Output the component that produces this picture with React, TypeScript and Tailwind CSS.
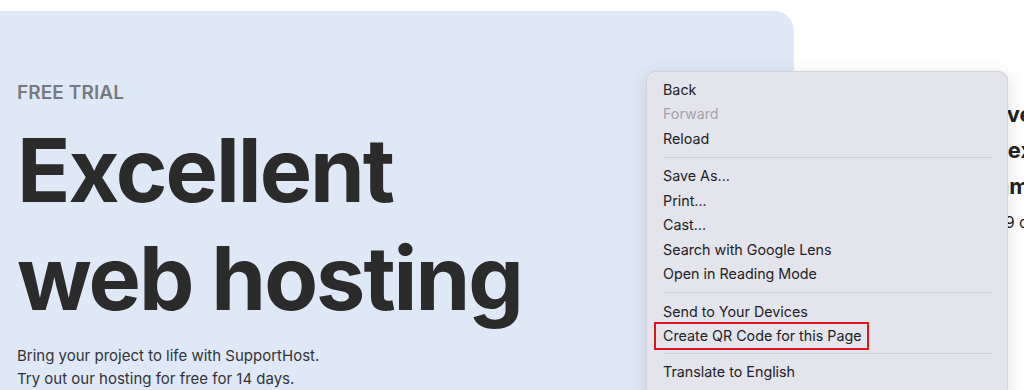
import React from "react";

const Sep = ({ tight }: { tight?: boolean }) => (
  <div className={`${tight ? "my-[5px]" : "my-[6px]"} ml-4 mr-[15px] h-px bg-[#cdd0da]`} />
);

const Item = ({ children, disabled }: { children: React.ReactNode; disabled?: boolean }) => (
  <div className={`h-[24.5px] flex items-center pl-4 ${disabled ? "text-[#a3a3aa]" : "text-[#222226]"}`}>
    {children}
  </div>
);

export default function App() {
  return (
    <div className="relative w-[1024px] h-[390px] overflow-hidden bg-white" style={{ fontFamily: "Inter, 'Noto Sans', sans-serif" }}>
      <div className="flex pt-[11px] h-full">
        <div className="w-[794px] shrink-0 h-[420px] bg-[#dfe8f7] rounded-tr-[20px] pl-[17px] pt-[70px]">
          <div className="text-[19px] font-semibold text-[#777a80] leading-[24px] tracking-[0.1px]">FREE TRIAL</div>
          <h1 className="mt-[11px] text-[88px] leading-[108px] font-bold text-[#2b2b2b] tracking-[-2px]">
            Excellent
            <br />
            web hosting
          </h1>
          <p className="mt-[12px] text-[15px] leading-[23px] text-[#333336]">
            Bring your project to life with SupportHost.
            <br />
            Try out our hosting for free for 14 days.
          </p>
        </div>
        <div className="flex-1 pl-[186px] pt-[85px] whitespace-nowrap text-[#222222]">
          <div className="text-[22px] font-bold leading-[36px]">Save</div>
          <div className="ml-[11px] text-[22px] font-bold leading-[36px]">Next</div>
          <div className="text-[22px] font-bold leading-[36px]">Game</div>
          <div className="ml-[14px] mt-[6px] text-[16px] leading-[24px]">€9 c</div>
        </div>
      </div>

      <div className="absolute left-[646px] top-[71px] w-[362px] h-[340px] rounded-[9px] bg-[#e4e4ec] border border-[#d2d3dc] shadow-[0_4px_18px_rgba(0,0,0,0.12)] pt-[5px] text-[14.3px]">
        <Item>Back</Item>
        <Item disabled>Forward</Item>
        <Item>Reload</Item>
        <Sep />
        <Item>Save As...</Item>
        <Item>Print...</Item>
        <Item>Cast...</Item>
        <Item>Search with Google Lens</Item>
        <Item>Open in Reading Mode</Item>
        <Sep />
        <Item>Send to Your Devices</Item>
        <div className="relative">
          <Item>Create QR Code for this Page</Item>
          <div className="absolute left-[7px] top-[-2px] w-[215px] h-[28px] border-2 border-[#e3111b]" />
        </div>
        <Sep tight />
        <Item>Translate to English</Item>
      </div>
    </div>
  );
}
